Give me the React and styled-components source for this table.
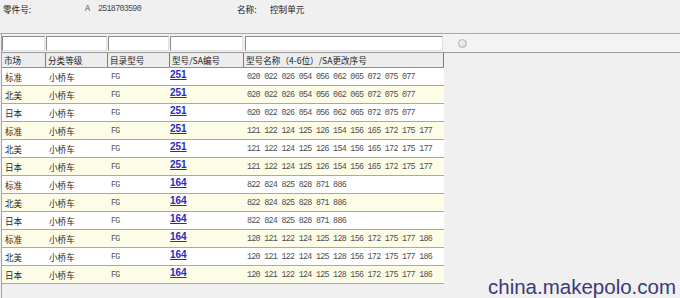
import React from 'react'
import styled, { createGlobalStyle } from 'styled-components'

const GlobalStyle = createGlobalStyle`
  html, body {
    margin: 0;
    padding: 0;
    background: #f0f0f0;
  }
  * {
    box-sizing: border-box;
  }
`

const COLS = '44px 62px 62px 74px 200px'
const CJK = `"Noto Sans CJK SC", "Noto Sans", sans-serif`
const MONO = `"Liberation Mono", "DejaVu Sans Mono", monospace`

const Page = styled.div`
  position: relative;
  width: 680px;
  height: 298px;
  overflow: hidden;
  background: #f0f0f0;
  display: flex;
  flex-direction: column;
  font-family: ${CJK};
  color: #222;
`

const InfoBar = styled.div`
  height: 34px;
  display: flex;
  align-items: flex-start;
  padding: 3px 0 0 3px;
  border-bottom: 1px solid #a9a9a9;
  font-size: 8.6px;
  line-height: 12px;
`

const InfoLabel = styled.span`
  width: ${({ $w }) => $w}px;
  flex-shrink: 0;
`

const InfoCode = styled.span`
  width: 152px;
  flex-shrink: 0;
  font-family: ${MONO};
  font-size: 8.4px;
  letter-spacing: -0.72px;
  white-space: pre;
  color: #4a4a4a;
`

const Main = styled.div`
  flex: 1;
  margin-left: 1px;
  border-left: 1px solid #a4a4a4;
  display: flex;
  flex-direction: column;
`

const FilterRow = styled.div`
  height: 19px;
  display: flex;
  border-bottom: 1px solid #9c9c9c;
`

const FilterGrid = styled.div`
  display: grid;
  grid-template-columns: ${COLS};
  padding-top: 2px;
`

const FilterInput = styled.input`
  display: block;
  height: 15px;
  width: calc(100% - ${({ $last }) => ($last ? 2 : 1)}px);
  margin-left: ${({ $last }) => ($last ? 1 : 0)}px;
  padding: 0;
  background: #fff;
  border: 1px solid;
  border-color: #8c8c8c #e2e2e2 #e2e2e2 #8c8c8c;
  outline: none;
`

const FilterTail = styled.div`
  flex: 1;
  display: flex;
  align-items: center;
  padding-left: 14px;
  background: #f3f3f3;
`

const Radio = styled.span`
  width: 9px;
  height: 9px;
  border-radius: 50%;
  border: 1px solid #b4b4b4;
  background: radial-gradient(circle at 40% 35%, #f4f4f4, #cfcfcf);
`

const Table = styled.div`
  width: 442px;
  display: flex;
  flex-direction: column;
`

const HeaderRow = styled.div`
  display: grid;
  grid-template-columns: ${COLS};
  height: 15px;
  background: #ededed;
  border-bottom: 1px solid #8e8e8e;
`

const HeaderCell = styled.div`
  display: flex;
  align-items: center;
  padding-left: 2px;
  border-right: 1px solid #7c7c7c;
  font-size: 8.6px;
  white-space: nowrap;
  overflow: hidden;
`

const Row = styled.div`
  display: grid;
  grid-template-columns: ${COLS};
  height: 18px;
  background: ${({ $alt }) => ($alt ? '#fdfce6' : '#ffffff')};
  border-bottom: 1px solid #a8a8a8;
`

const Cell = styled.div`
  display: flex;
  align-items: center;
  padding-left: ${({ $pad }) => $pad}px;
  font-size: 8.6px;
  white-space: nowrap;
  overflow: hidden;
  color: #2a2a2a;
`

const MonoCell = styled(Cell)`
  font-family: ${MONO};
  font-size: 8.4px;
  letter-spacing: -0.72px;
  color: #505050;
`

const LinkCell = styled(Cell)`
  align-items: flex-start;
  padding-top: 2px;
`

const Link = styled.a`
  font-family: "Liberation Sans", Arial, sans-serif;
  font-weight: bold;
  font-size: 10px;
  line-height: 10px;
  color: #2929cc;
  text-decoration: underline;
`

const Watermark = styled.div`
  position: absolute;
  left: 488px;
  top: 277px;
  font-family: "Liberation Sans", Arial, sans-serif;
  font-size: 20.5px;
  line-height: 20.5px;
  color: #3a3a7c;
  white-space: nowrap;
`

const markets = ['标准', '北美', '日本']
const groups = [
  ['251', '020 022 026 054 056 062 065 072 075 077'],
  ['251', '121 122 124 125 126 154 156 165 172 175 177'],
  ['164', '822 824 825 828 871 886'],
  ['164', '120 121 122 124 125 128 156 172 175 177 186'],
]

const rows = groups.flatMap(([sa, codes]) =>
  markets.map(market => ({ market, sa, codes }))
)

const headers = ['市场', '分类等级', '目录型号', '型号/SA编号', '型号名称（4-6位）/SA更改序号']

const App = () => {
  return (
    <Page>
      <GlobalStyle />
      <InfoBar>
        <InfoLabel $w={82}>零件号:</InfoLabel>
        <InfoCode>{'A  2518703590'}</InfoCode>
        <InfoLabel $w={33}>名称:</InfoLabel>
        <span>控制单元</span>
      </InfoBar>
      <Main>
        <FilterRow>
          <FilterGrid>
            {headers.map((h, i) => (
              <FilterInput key={h} $last={i === headers.length - 1} />
            ))}
          </FilterGrid>
          <FilterTail>
            <Radio />
          </FilterTail>
        </FilterRow>
        <Table>
          <HeaderRow>
            {headers.map(h => (
              <HeaderCell key={h}>{h}</HeaderCell>
            ))}
          </HeaderRow>
          {rows.map((r, i) => (
            <Row key={i} $alt={i % 2 === 1}>
              <Cell $pad={3}>{r.market}</Cell>
              <Cell $pad={3}>小桥车</Cell>
              <MonoCell $pad={3}>FG</MonoCell>
              <LinkCell $pad={0}>
                <Link href="#">{r.sa}</Link>
              </LinkCell>
              <MonoCell $pad={3}>{r.codes}</MonoCell>
            </Row>
          ))}
        </Table>
      </Main>
      <Watermark>china.makepolo.com</Watermark>
    </Page>
  )
}

export default App
